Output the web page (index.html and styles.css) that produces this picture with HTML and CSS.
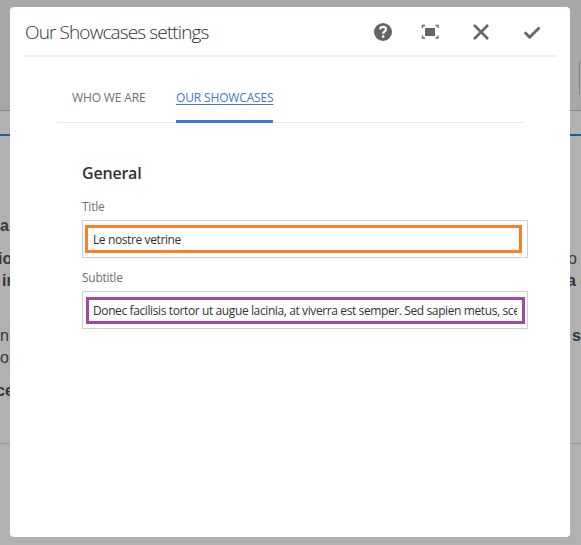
FILE: index.html
```
<!DOCTYPE html>
<html lang="en">
<head>
<meta charset="utf-8">
<title>Our Showcases settings</title>
<link rel="stylesheet" href="styles.css">
</head>
<body>
<div class="page">
  <header class="page-header"><span class="page-divider"></span></header>
  <div class="page-body">
    <div class="edge edge-left">
      <p class="strong line-a">a</p>
      <p class="strong line-b">io</p>
      <p class="strong line-c">in</p>
      <p class="line-d">n</p>
      <p class="line-e">or</p>
      <p class="strong line-f">ce</p>
    </div>
    <div class="edge edge-right">
      <p class="line-b">o</p>
      <p class="strong line-c">a c</p>
      <p class="strong line-d">se</p>
    </div>
  </div>
</div>
<section class="dialog">
  <header class="dialog-header">
    <h1>Our Showcases settings</h1>
    <div class="actions">
      <svg width="20" height="20" viewBox="0 0 20 20"><circle cx="10" cy="10" r="9" fill="#656565"/><path d="M7 7.4C7.3 5.7 8.4 4.9 10 4.9c1.8 0 3 .9 3 2.4 0 2.1-2.8 2.1-2.8 4.5M10.2 13.2v2.5" fill="none" stroke="#fff" stroke-width="2.2"/></svg>
      <svg class="icon-expand" width="20" height="20" viewBox="0 0 20 20"><path d="M5 6h10v8H5z" fill="#656565"/><path d="M2.5 6V3.5H5M15.5 3.5H18V6M2.5 13.5V16H5M15.5 16H18V13.5" fill="none" stroke="#656565" stroke-width="1.3"/></svg>
      <svg class="icon-close" width="20" height="20" viewBox="0 0 20 20"><path d="M3 3l14 14M17 3L3 17" fill="none" stroke="#656565" stroke-width="2.7"/></svg>
      <svg width="20" height="20" viewBox="0 0 20 20"><path d="M2.7 10.3l5 5L17.5 5.5" fill="none" stroke="#656565" stroke-width="2.8"/></svg>
    </div>
  </header>
  <nav class="tabs">
    <a class="tab tab-who">WHO WE ARE</a>
    <a class="tab tab-active">OUR SHOWCASES</a>
  </nav>
  <form class="form">
    <h2>General</h2>
    <label class="label-title">Title</label>
    <div class="field"><div class="mark mark-orange"><span class="value value-title">Le nostre vetrine</span></div></div>
    <label class="label-subtitle">Subtitle</label>
    <div class="field"><div class="mark mark-purple"><span class="value">Donec facilisis tortor ut augue lacinia, at viverra est semper. Sed sapien metus, scelerisque</span></div></div>
  </form>
</section>
</body>
</html>
```
FILE: styles.css
```
* { box-sizing: border-box; }
body { margin: 0; width: 581px; height: 545px; overflow: hidden; font-family: "Open Sans", "Noto Sans", sans-serif; }
h1, h2, p { margin: 0; }
.page { height: 545px; background: #b1b1b1; }
.page-header { height: 111px; padding-top: 61px; background: #a9a7a8; border-bottom: 1px solid #888687; display: flex; justify-content: flex-end; }
.page-divider { width: 2px; height: 34px; border-left: 1px solid #888687; }
.page-body { height: 310px; margin-top: 23px; border-top: 2px solid #1b5e9e; border-bottom: 1px solid #979797; display: flex; justify-content: space-between; font: 16px/20px "Liberation Sans", sans-serif; color: #373737; }
.edge { height: 307px; width: 14px; overflow: hidden; white-space: nowrap; padding-top: 80px; }
.edge p { height: 20px; }
.strong { font-weight: bold; }
.edge-right .line-b { margin-top: 33px; padding-left: 1px; }
.edge-left .line-b { margin: 13px 0 0 -2px; }
.edge .line-c { margin-top: 2px; }
.edge-left .line-c { padding-left: 2px; }
.edge .line-d { margin-top: 35px; }
.edge-left .line-e { margin-top: 2px; }
.edge-left .line-f { margin: 13px 0 0 -4px; }
.edge-right .line-d { padding-left: 5px; }
.dialog { position: absolute; left: 10px; top: 7px; width: 560px; height: 530px; background: #fff; border-radius: 4px; }
.dialog-header { height: 50px; margin: 0 14px 0 15px; border-bottom: 2px solid #f0f0f0; display: flex; justify-content: space-between; }
h1 { font-size: 19px; font-weight: 300; line-height: 50px; color: #323232; letter-spacing: -.88px; white-space: nowrap; }
.actions { display: flex; gap: 29.7px; padding: 15px 14px 0 0; }
.actions svg { display: block; flex: none; }
.icon-expand { margin: 0 2px 0 -2.5px; }
.icon-close { margin: 0 1px 0 -.5px; }
.tabs { height: 66px; margin: 0 47px; border-bottom: 1px solid #e8e8e8; padding: 25px 0 0 15px; display: flex; gap: 30px; }
.tab { height: 41px; font-size: 12px; line-height: 32px; color: #707070; white-space: nowrap; letter-spacing: -.15px; }
.tab-who { width: 74px; }
.tab-active { width: 97px; color: #4178cd; border-bottom: 3px solid #4178cd; text-decoration: underline; text-underline-offset: 2px; }
.form { margin: 38px 42px 0 72px; }
h2 { height: 24px; font-size: 16px; font-weight: 600; line-height: 24px; color: #323232; letter-spacing: -.2px; }
label { display: block; height: 18px; margin-top: 13px; font-size: 12px; line-height: 18px; color: #707070; letter-spacing: -.25px; }
.label-subtitle { margin-top: 11px; }
.field { height: 38px; margin-top: 4px; padding: 4px 5px 4px 2px; border: 1px solid #d0d0d0; }
.mark { height: 28px; border: 3px solid #ff7f27; padding: 0 5px; }
.mark-purple { height: 27px; margin: 1px -3px 0 1px; border-color: #a349a4; padding-left: 4px; }
.value { display: block; overflow: hidden; white-space: nowrap; font-size: 12px; line-height: 23px; color: #323232; letter-spacing: -.39px; }
.mark-purple .value { line-height: 21px; }
```
